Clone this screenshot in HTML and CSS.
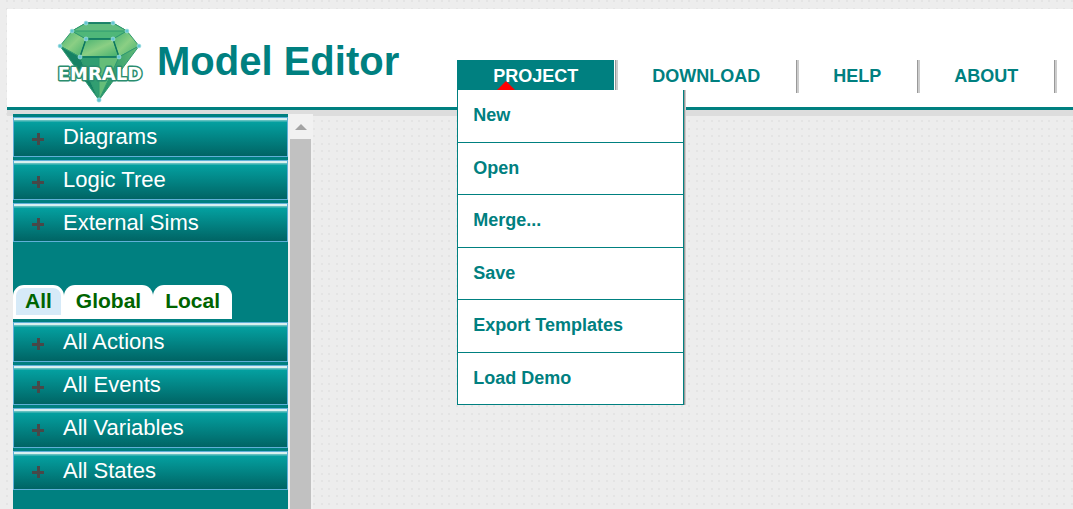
FILE: index.html
```html
<!DOCTYPE html>
<html lang="en">
<head>
<meta charset="utf-8">
<title>Emrald Model Editor</title>
<link rel="stylesheet" href="styles.css">
</head>
<body>
<header class="header">
  <svg class="logo" viewBox="0 0 90 86" role="img" aria-label="EMRALD">
    <defs>
      <linearGradient id="shine" x1="0" y1="0" x2="1" y2="1">
        <stop offset="0" stop-color="#43b070"/><stop offset=".5" stop-color="#8bcf84"/><stop offset="1" stop-color="#3fae6c"/>
      </linearGradient>
      <linearGradient id="deep" x1="0" y1="0" x2="1" y2="0">
        <stop offset="0" stop-color="#1f9166"/><stop offset="1" stop-color="#63bb78"/>
      </linearGradient>
    </defs>
    <g stroke="#2f9a70" stroke-width="1" stroke-linejoin="round">
      <path d="M5 26 17 11 31 19 25 37Z" fill="url(#shine)"/>
      <path d="M17 11 31 3 58 3 72 11 58 19 31 19Z" fill="#4fb779"/>
      <path d="M31 3 58 3 72 11 17 11Z" fill="#62bd80"/>
      <path d="M31 19 58 19 64 37 25 37Z" fill="url(#shine)"/>
      <path d="M72 11 84 26 64 37 58 19Z" fill="url(#shine)"/>
      <path d="M5 26 25 37 44 80Z" fill="#168263"/>
      <path d="M84 26 64 37 44 80Z" fill="url(#deep)"/>
      <path d="M25 37 64 37 44 80Z" fill="#65bd79"/>
      <path d="M25 37 44 80 44 37Z" fill="#319e71"/>
    </g>
    <path d="M31 3H58M31 19H58M25 37 31 19M64 37 58 19M25 37H64" fill="none" stroke="#0b7660" stroke-width="1.4"/>
    <g fill="#63c5d2" stroke="#b5e7e6" stroke-width=".6">
      <circle cx="31" cy="3" r="2"/><circle cx="58" cy="3" r="2"/><circle cx="17" cy="11" r="2"/><circle cx="72" cy="11" r="2"/>
      <circle cx="31" cy="19" r="2"/><circle cx="58" cy="19" r="2"/><circle cx="5" cy="26" r="2"/><circle cx="84" cy="26" r="2"/>
      <circle cx="25" cy="37" r="2"/><circle cx="64" cy="37" r="2"/><circle cx="44" cy="80" r="2.2"/>
    </g>
    <text class="logo-text" x="45" y="60" text-anchor="middle">EMRALD</text>
  </svg>
  <h1 class="title">Model Editor</h1>
  <nav class="nav">
    <div class="nav-item">
      <button class="nav-link nav-active" type="button" aria-expanded="true">PROJECT</button>
      <div class="menu">
        <button class="menu-item" type="button">New</button>
        <button class="menu-item" type="button">Open</button>
        <button class="menu-item" type="button">Merge...</button>
        <button class="menu-item" type="button">Save</button>
        <button class="menu-item" type="button">Export Templates</button>
        <button class="menu-item" type="button">Load Demo</button>
      </div>
    </div>
    <div class="nav-item"><button class="nav-link" type="button">DOWNLOAD</button></div>
    <div class="nav-item"><button class="nav-link" type="button">HELP</button></div>
    <div class="nav-item"><button class="nav-link" type="button">ABOUT</button></div>
  </nav>
</header>
<div class="side">
  <aside class="panel">
    <div class="group">
      <button class="row" type="button"><span class="plus"></span>Diagrams</button>
      <button class="row" type="button"><span class="plus"></span>Logic Tree</button>
      <button class="row" type="button"><span class="plus"></span>External Sims</button>
    </div>
    <div class="tabs">
      <button class="tab tab-active" type="button">All</button>
      <button class="tab" type="button">Global</button>
      <button class="tab" type="button">Local</button>
    </div>
    <div class="group">
      <button class="row" type="button"><span class="plus"></span>All Actions</button>
      <button class="row" type="button"><span class="plus"></span>All Events</button>
      <button class="row" type="button"><span class="plus"></span>All Variables</button>
      <button class="row" type="button"><span class="plus"></span>All States</button>
    </div>
  </aside>
  <div class="scroll">
    <div class="scroll-up"></div>
    <div class="scroll-thumb"></div>
  </div>
</div>
</body>
</html>
```
FILE: styles.css
```css
* { box-sizing: border-box; }
body {
  margin: 0;
  padding: 9px 0 0 7px;
  height: 100vh;
  overflow: hidden;
  display: flex;
  flex-direction: column;
  font-family: "Liberation Sans", Arial, sans-serif;
  background-color: #ededed;
  background-image:
    conic-gradient(from 90deg at 13px 13px, #e4e4e4 25%, transparent 0),
    conic-gradient(from 90deg at 13px 13px, #e4e4e4 25%, transparent 0),
    conic-gradient(from 90deg at 13px 13px, #e4e4e4 25%, transparent 0),
    conic-gradient(from 90deg at 13px 13px, #e4e4e4 25%, transparent 0);
  background-size: 15px 15px;
  background-position: 0 2px, 8px 2px, 0 10px, 8px 10px;
}
button {
  margin: 0;
  border: 0;
  padding: 0;
  background: none;
  font-family: inherit;
  text-align: left;
  white-space: nowrap;
}
.header {
  display: flex;
  align-items: flex-start;
  flex: none;
  height: 101px;
  background: #fff;
  border-bottom: 3px solid #008080;
  box-shadow: 0 6px #ddd;
}
.logo {
  flex: none;
  width: 90px;
  height: 86px;
  margin: 11px 0 0 48px;
  overflow: visible;
}
.logo-text {
  font: bold 18px "DejaVu Sans", sans-serif;
  fill: #fff;
  stroke: #2b8d6e;
  stroke-width: 3px;
  stroke-linejoin: round;
  paint-order: stroke;
}
.title {
  margin: 29px 58px 0 12px;
  font-size: 40px;
  line-height: 46px;
  color: #008080;
  white-space: nowrap;
}
.nav { display: flex; margin-top: 51px; }
.nav-item {
  position: relative;
  flex: none;
  height: 33px;
  border-right: 1px solid #999;
  box-shadow: 2px 0 #ccc;
}
.nav-link {
  position: relative;
  padding: 1px 36px 0;
  display: block;
  height: 30px;
  font-size: 18px;
  font-weight: bold;
  line-height: 30px;
  color: #008080;
}
.nav-active { background: #008080; color: #fff; margin-right: 1px; }
.nav-active::after {
  content: "";
  position: absolute;
  left: 40px;
  bottom: 0;
  border: 9px solid transparent;
  border-top: 0;
  border-bottom-color: #f00;
}
.menu {
  position: absolute;
  z-index: 2;
  top: 30px;
  left: 0;
  width: 227px;
  height: 315px;
  display: grid;
  grid-auto-rows: 1fr;
  background: #fff;
  border: solid #008080;
  border-width: 0 1px;
  box-shadow: 1px 0 #999, 2px 0 #ccc;
}
.menu-item {
  padding: 0 15px;
  border-bottom: 1px solid #008080;
  font-size: 18px;
  font-weight: bold;
  color: #008080;
}
.side {
  position: relative;
  display: flex;
  flex: 1;
  width: 300px;
  min-height: 0;
  margin: 4px 0 0 6px;
}
.panel { flex: 1; padding-top: 3px; background: #008080; }
.group { display: grid; gap: 3px; }
.row {
  display: flex;
  align-items: center;
  height: 40px;
  padding: 0 18px;
  border: 1px solid #5fb0d8;
  font-size: 22px;
  color: #fff;
  background: linear-gradient(#d8f0f0 0 2px, #62c0c0 2px 3px, #04a0a0 4px, #006464);
}
.row:last-child { height: 39px; }
.plus {
  width: 12px;
  height: 12px;
  margin: 3px 19px 0 0;
  background:
    linear-gradient(#484848, #484848) 0 5px / 12px 3px no-repeat,
    linear-gradient(#484848, #484848) 5px 0 / 3px 12px no-repeat;
}
.tabs { display: flex; margin: 43px 0 3px; }
.tab {
  height: 34px;
  padding: 0 12px 2px;
  border-radius: 11px 11px 0 0;
  font-size: 21px;
  font-weight: bold;
  color: #006400;
  background: #fff;
}
.tab-active {
  padding: 0 9px 2px;
  border: solid #fff;
  border-width: 3px 3px 4px;
  background: #d6eaf8;
}
.scroll { width: 25px; padding: 0 2px; background: #f1f1f1; display: flex; flex-direction: column; }
.scroll-up {
  height: 25px;
  flex: none;
  display: grid;
  place-items: center;
}
.scroll-up::before {
  content: "";
  border: 6px solid transparent;
  border-top: 0;
  border-bottom-color: #a3a3a3;
}
.scroll-thumb { flex: 1; background: #c1c1c1; }
```
